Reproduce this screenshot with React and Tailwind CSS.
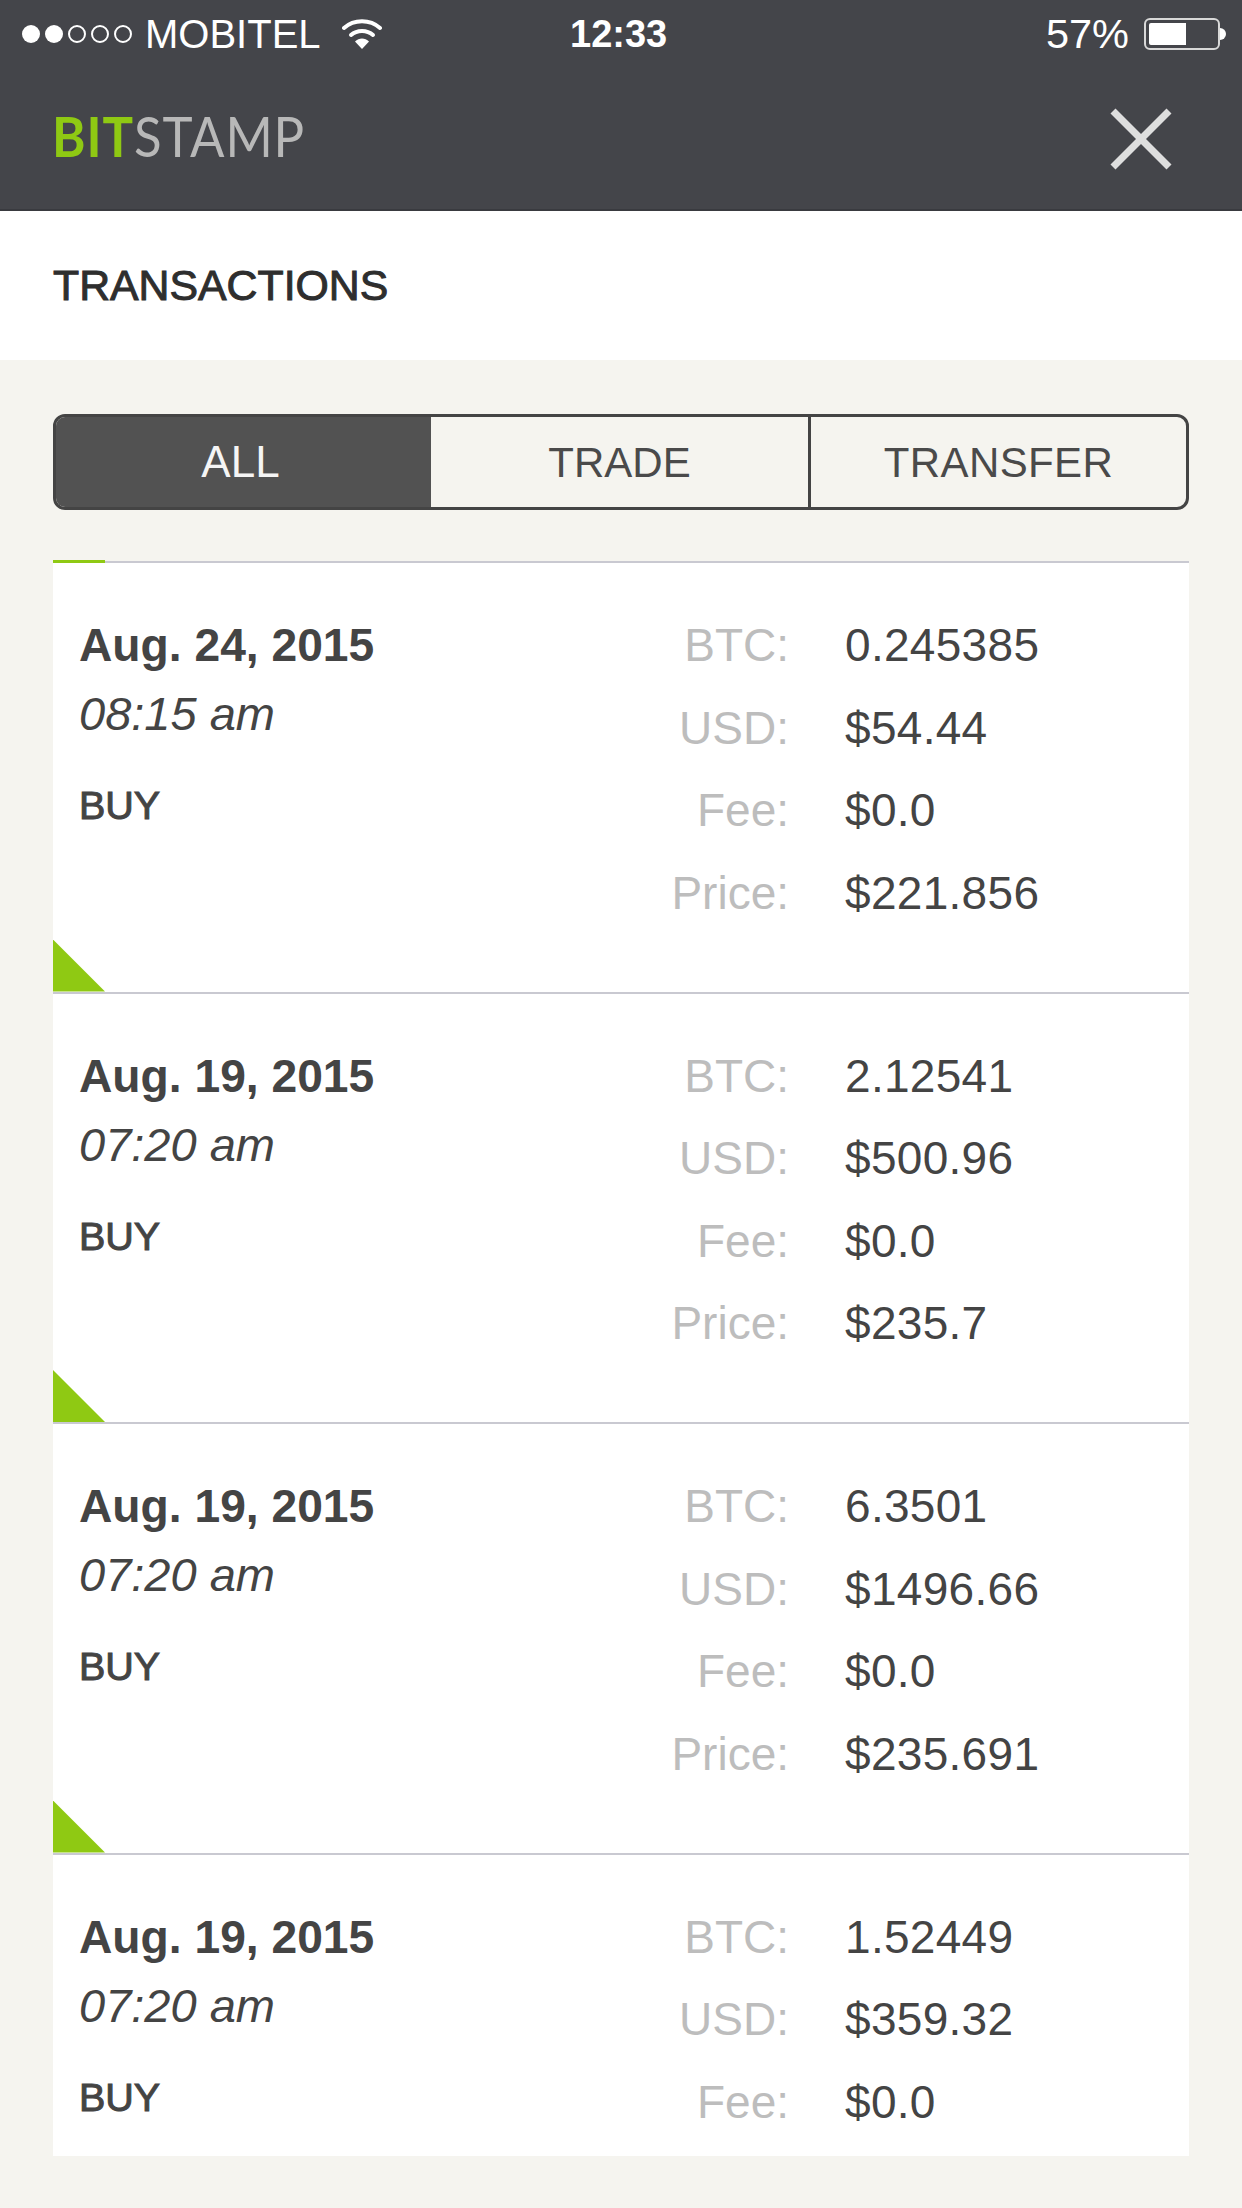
import { X } from "lucide-react";

const transactions = [
  { date: "Aug. 24, 2015", time: "08:15 am", btc: "0.245385", usd: "$54.44", fee: "$0.0", price: "$221.856" },
  { date: "Aug. 19, 2015", time: "07:20 am", btc: "2.12541", usd: "$500.96", fee: "$0.0", price: "$235.7" },
  { date: "Aug. 19, 2015", time: "07:20 am", btc: "6.3501", usd: "$1496.66", fee: "$0.0", price: "$235.691" },
  { date: "Aug. 19, 2015", time: "07:20 am", btc: "1.52449", usd: "$359.32", fee: "$0.0" },
];

function StatusBar() {
  return (
    <div className="flex h-[68px] items-center pl-[22px] pr-[16px] text-white relative">
      <div className="flex gap-[5px]">
        <span className="w-[18px] h-[18px] rounded-full bg-white" />
        <span className="w-[18px] h-[18px] rounded-full bg-white" />
        <span className="w-[18px] h-[18px] rounded-full border-2 border-white" />
        <span className="w-[18px] h-[18px] rounded-full border-2 border-white" />
        <span className="w-[18px] h-[18px] rounded-full border-2 border-white" />
      </div>
      <span className="ml-[13px] text-[40px] leading-none">MOBITEL</span>
      <svg className="ml-[21px]" width="40" height="30" viewBox="0 0 40 30" fill="none">
        <path d="M2 9C12 0 28 0 38 9" stroke="white" strokeWidth="4" strokeLinecap="round" />
        <path d="M9 16C15 10.500 25 10.500 31 16" stroke="white" strokeWidth="4" strokeLinecap="round" />
        <path d="M20 30L13 22.500C17 18.500 23 18.500 27 22.500Z" fill="white" />
      </svg>
      <span className="absolute left-[570px] top-[15px] text-[38px] leading-none font-bold">12:33</span>
      <span className="ml-auto text-[41.500px] leading-none">57%</span>
      <div className="ml-[15px] flex items-center">
        <div className="w-[76px] h-[32px] rounded-[6px] border-2 border-[#d8d8d8] p-[3px]">
          <div className="w-[37px] h-full bg-white rounded-l-[2px]" />
        </div>
        <div className="w-[6px] h-[12px] bg-white rounded-r-full" />
      </div>
    </div>
  );
}

function Row({ tx, last }) {
  const rows = [
    ["BTC:", tx.btc],
    ["USD:", tx.usd],
    ["Fee:", tx.fee],
    ["Price:", tx.price],
  ].filter((row) => row[1]);

  return (
    <div className={last ? "relative h-[301px] flex" : "relative h-[430.500px] border-b-2 border-[#c9c9d1] flex"}>
      <div className="flex-1 pl-[26px] pt-[54px] text-[#444444]">
        <div className="text-[46.200px] leading-[56px] font-bold">{tx.date}</div>
        <div className="text-[47px] leading-[56px] italic mt-[13px]">{tx.time}</div>
        <div className="text-[39.500px] leading-[46px] mt-[40px] [-webkit-text-stroke:1px_#444444]">BUY</div>
      </div>
      <div className="pt-[41px] text-[46px] leading-[82.600px]">
        {rows.map(([label, value]) => (
          <div key={label} className="flex">
            <div className="w-[200px] text-right text-[#bdbdbd]">{label}</div>
            <div className="w-[344px] ml-[56px] text-[#444444] tracking-[0.300px]">{value}</div>
          </div>
        ))}
      </div>
      {!last && (
        <div className="absolute left-0 bottom-0 w-[52px] h-[52px] bg-[#8fc913] [clip-path:polygon(0_0,100%_100%,0_100%)]" />
      )}
    </div>
  );
}

export default function App() {
  return (
    <div className="w-[1242px] h-[2208px] overflow-hidden flex flex-col bg-[#f5f4ef] font-['Liberation_Sans',Arial,sans-serif]">
      <div className="h-[211px] shrink-0 bg-[#44454a] border-b-2 border-[#393a3f]">
        <StatusBar />
        <div className="flex items-center justify-between pl-[52px] pr-[73px] h-[141px]">
          <div className="font-['Lato',sans-serif] text-[56px] leading-none tracking-[1px] origin-left scale-x-[0.91] mb-[5px]">
            <span className="font-bold text-[#8fc913]">BIT</span>
            <span className="text-[#b8b8b8]">STAMP</span>
          </div>
          <X size={112} strokeWidth={1.500} strokeLinecap="butt" color="#dedede" className="m-[-28px]" />
        </div>
      </div>

      <div className="h-[149px] shrink-0 bg-white flex items-center pl-[53px]">
        <h1 className="text-[42.800px] text-[#2e2e2e] [-webkit-text-stroke:1px_#2e2e2e]">TRANSACTIONS</h1>
      </div>

      <div className="mt-[54px] mx-[53px] h-[96px] shrink-0 flex rounded-[12px] border-[3px] border-[#444444] overflow-hidden text-[42px] text-[#4a4a4a]">
        <div className="w-[375px] pr-[6px] bg-[#525252] text-[44px] text-[#f5f5f5] flex items-center justify-center">ALL</div>
        <div className="w-[380px] flex items-center justify-center border-r-[3px] border-[#444444]">TRADE</div>
        <div className="flex-1 flex items-center justify-center tracking-[0.400px]">TRANSFER</div>
      </div>

      <div className="relative mt-[51px] mx-[53px] bg-white border-t-2 border-[#c9c9d1] flex flex-col">
        <div className="absolute -top-[3px] left-0 w-[52px] h-[3px] bg-[#8fc913]" />
        {transactions.map((tx, i) => (
          <Row key={i} tx={tx} last={i === transactions.length - 1} />
        ))}
      </div>
    </div>
  );
}
